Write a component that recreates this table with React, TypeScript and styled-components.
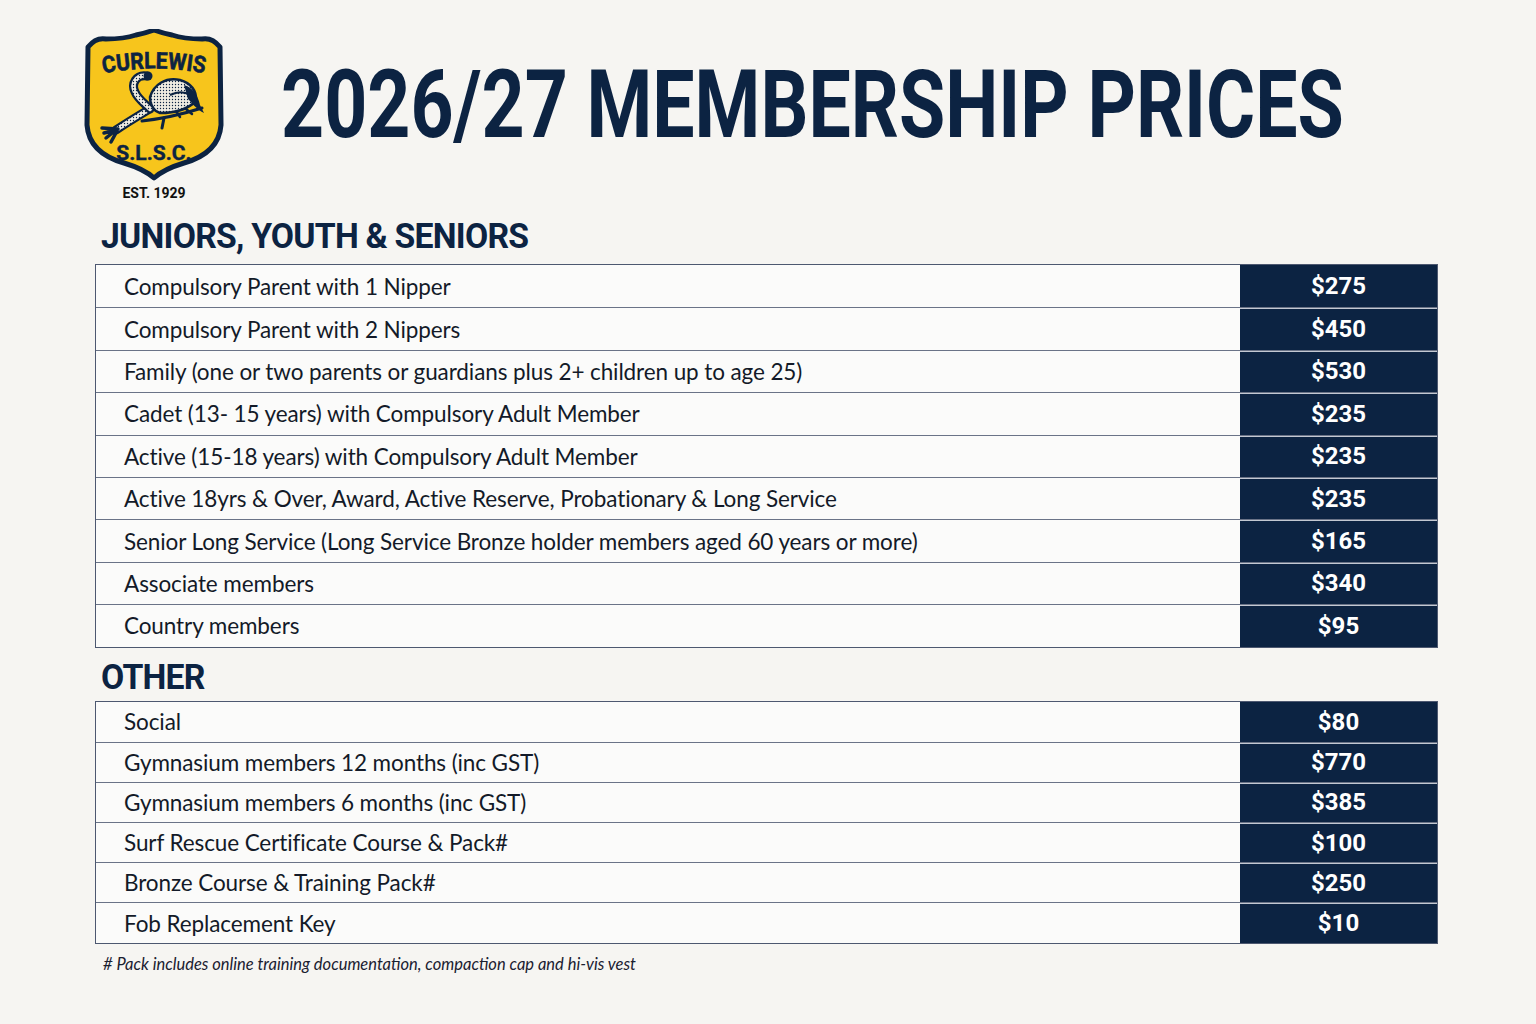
import React, { FC } from 'react';
import styled, { createGlobalStyle } from 'styled-components';

const NAVY = '#0c2342';

const GlobalStyle = createGlobalStyle`
  html, body {
    margin: 0;
    background: #f6f5f2;
  }
  body {
    font-family: Lato, "Liberation Sans", sans-serif;
    color: #141a26;
  }
`;

const Page = styled.div`
  width: 1536px;
  height: 1024px;
  box-sizing: border-box;
  padding: 29px 98px 0 95px;
`;

const Header = styled.header`
  display: flex;
  align-items: flex-start;
  margin-left: -11px;
  height: 190px;
`;

const LogoColumn = styled.div`
  width: 140px;
  display: flex;
  flex-direction: column;
  align-items: center;
`;

const Est = styled.div`
  font-family: Roboto, "Liberation Sans", sans-serif;
  font-weight: 700;
  font-size: 14px;
  line-height: 16px;
  margin-top: 4px;
  color: #111;
`;

const Title = styled.h1`
  margin: 29px 0 0 57px;
  font-family: Roboto, "Liberation Sans", sans-serif;
  font-weight: 700;
  font-size: 94px;
  line-height: 1;
  color: ${NAVY};
  white-space: nowrap;
  display: inline-block;
  transform: scaleX(0.8);
  transform-origin: left center;
`;

const SectionTitle = styled.h2<{ $gap: number }>`
  display: block;
  width: fit-content;
  margin: 0 0 ${({ $gap }) => $gap}px 6px;
  font-family: Roboto, "Liberation Sans", sans-serif;
  font-weight: 700;
  font-size: 35px;
  line-height: 36px;
  letter-spacing: -0.8px;
  color: ${NAVY};
  transform: scaleX(0.964);
  transform-origin: left center;
`;

const Table = styled.div<{ $spaced?: boolean }>`
  border: 1.5px solid #4d5870;
  background: #fbfbfa;
  margin-bottom: ${({ $spaced }) => ($spaced ? 12 : 0)}px;
`;

const Row = styled.div<{ $h: number }>`
  display: flex;
  box-sizing: border-box;
  height: ${({ $h }) => $h}px;
  & + & {
    border-top: 1.5px solid #6a7387;
  }
`;

const Label = styled.div`
  flex: 1;
  display: flex;
  align-items: center;
  padding-left: 28px;
  font-size: 22.5px;
  letter-spacing: -0.1px;
  color: #131a28;
`;

const Price = styled.div`
  width: 197px;
  display: flex;
  align-items: center;
  justify-content: center;
  background: ${NAVY};
  color: #fff;
  font-family: Roboto, "Liberation Sans", sans-serif;
  font-weight: 700;
  font-size: 24px;
  box-shadow: inset 0 1px 0 #c3c8d2;
  ${Row}:first-child & {
    box-shadow: none;
  }
`;

const Footnote = styled.p`
  margin: 10px 0 0 8px;
  font-style: italic;
  font-size: 16.5px;
  line-height: 20px;
  color: #1a2030;
`;

const Logo: FC = () => (
  <svg width="140" height="152" viewBox="0 0 140 152">
    <defs>
      <path id="arc" d="M16,45 Q70,34 124,45" />
      <pattern id="speck" width="3" height="3" patternUnits="userSpaceOnUse">
        <rect width="3" height="3" fill="#efece2" />
        <circle cx="1.5" cy="1.5" r="0.7" fill={NAVY} />
      </pattern>
    </defs>
    <path
      d="M4,18 Q12,8 22,10 Q40,10 52,6 Q62,4 70,1 Q78,4 88,6 Q100,10 118,10 Q128,8 136,18 L137,96 Q135,124 100,134 Q80,140 70,149 Q60,140 40,134 Q5,124 3,96 Z"
      fill="#f7c51c"
      stroke={NAVY}
      strokeWidth="5"
      strokeLinejoin="round"
    />
    <text
      fontFamily="Roboto, 'Liberation Sans', sans-serif"
      fontWeight="700"
      fontSize="23"
      fill={NAVY}
      stroke={NAVY}
      strokeWidth="0.6"
    >
      <textPath href="#arc" startOffset="50%" textAnchor="middle" textLength="102" lengthAdjust="spacingAndGlyphs">
        CURLEWIS
      </textPath>
    </text>
    {/* curlew on a branch */}
    <path d="M58,92 C76,90 96,86 118,79" fill="none" stroke={NAVY} strokeWidth="3" strokeLinecap="round" />
    <path d="M80,89 L78,99" stroke={NAVY} strokeWidth="3" strokeLinecap="round" />
    <path d="M92,82 L96,88 M102,80 L108,85" stroke={NAVY} strokeWidth="2.5" strokeLinecap="round" />
    <path d="M64,81 C54,87 44,93 32,101" fill="none" stroke={NAVY} strokeWidth="9" strokeLinecap="round" />
    <path d="M64,81 C54,87 44,93 32,101" fill="none" stroke="url(#speck)" strokeWidth="4.5" strokeLinecap="round" />
    <path d="M32,101 L20,104 M32,101 L22,109 M33,102 L27,113 M34,100 L18,99" stroke={NAVY} strokeWidth="3.5" strokeLinecap="round" fill="none" />
    <path
      d="M66,68 C70,55 82,48 96,51 C107,54 113,62 112,72 C104,80 90,84 76,84 C70,82 66,77 66,68 Z"
      fill="url(#speck)"
      stroke={NAVY}
      strokeWidth="2.5"
    />
    <path d="M100,56 C108,58 114,66 116,76 L120,84 C112,80 108,74 104,70 Z" fill={NAVY} />
    <path d="M86,66 C94,62 100,62 106,66" fill="none" stroke={NAVY} strokeWidth="2" />
    <path d="M63,47 C52,45 47,55 51,63 C54,70 60,74 66,80" fill="none" stroke={NAVY} strokeWidth="9" strokeLinecap="round" />
    <path d="M63,47 C52,45 47,55 51,63 C54,70 60,74 66,80" fill="none" stroke="url(#speck)" strokeWidth="4.5" strokeLinecap="round" />
    <circle cx="64" cy="47" r="4.5" fill={NAVY} />
    <text
      x="70"
      y="131"
      textAnchor="middle"
      fontFamily="Roboto, 'Liberation Sans', sans-serif"
      fontWeight="700"
      fontSize="21"
      fill={NAVY}
      stroke={NAVY}
      strokeWidth="0.4"
    >
      S.L.S.C.
    </text>
  </svg>
);

interface Item {
  label: string;
  price: string;
}

const JUNIORS: Item[] = [
  { label: 'Compulsory Parent with 1 Nipper', price: '$275' },
  { label: 'Compulsory Parent with 2 Nippers', price: '$450' },
  { label: 'Family (one or two parents or guardians plus 2+ children up to age 25)', price: '$530' },
  { label: 'Cadet (13- 15 years) with Compulsory Adult Member', price: '$235' },
  { label: 'Active (15-18 years) with Compulsory Adult Member', price: '$235' },
  { label: 'Active 18yrs & Over, Award, Active Reserve, Probationary & Long Service', price: '$235' },
  { label: 'Senior Long Service (Long Service Bronze holder members aged 60 years or more)', price: '$165' },
  { label: 'Associate members', price: '$340' },
  { label: 'Country members', price: '$95' },
];

const OTHER: Item[] = [
  { label: 'Social', price: '$80' },
  { label: 'Gymnasium members 12 months (inc GST)', price: '$770' },
  { label: 'Gymnasium members 6 months (inc GST)', price: '$385' },
  { label: 'Surf Rescue Certificate Course & Pack#', price: '$100' },
  { label: 'Bronze Course & Training Pack#', price: '$250' },
  { label: 'Fob Replacement Key', price: '$10' },
];

interface PriceTableProps {
  items: Item[];
  rowHeight: number;
  spaced?: boolean;
}

const PriceTable: FC<PriceTableProps> = ({ items, rowHeight, spaced }) => (
  <Table $spaced={spaced}>
    {items.map((item) => (
      <Row key={item.label} $h={rowHeight}>
        <Label>{item.label}</Label>
        <Price>{item.price}</Price>
      </Row>
    ))}
  </Table>
);

const App: FC = () => (
  <Page>
    <GlobalStyle />
    <Header>
      <LogoColumn>
        <Logo />
        <Est>EST. 1929</Est>
      </LogoColumn>
      <Title>2026/27 MEMBERSHIP PRICES</Title>
    </Header>
    <SectionTitle $gap={9}>JUNIORS, YOUTH &amp; SENIORS</SectionTitle>
    <PriceTable items={JUNIORS} rowHeight={42.4} spaced />
    <SectionTitle $gap={5}>OTHER</SectionTitle>
    <PriceTable items={OTHER} rowHeight={40.2} />
    <Footnote># Pack includes online training documentation, compaction cap and hi-vis vest</Footnote>
  </Page>
);

export default App;
